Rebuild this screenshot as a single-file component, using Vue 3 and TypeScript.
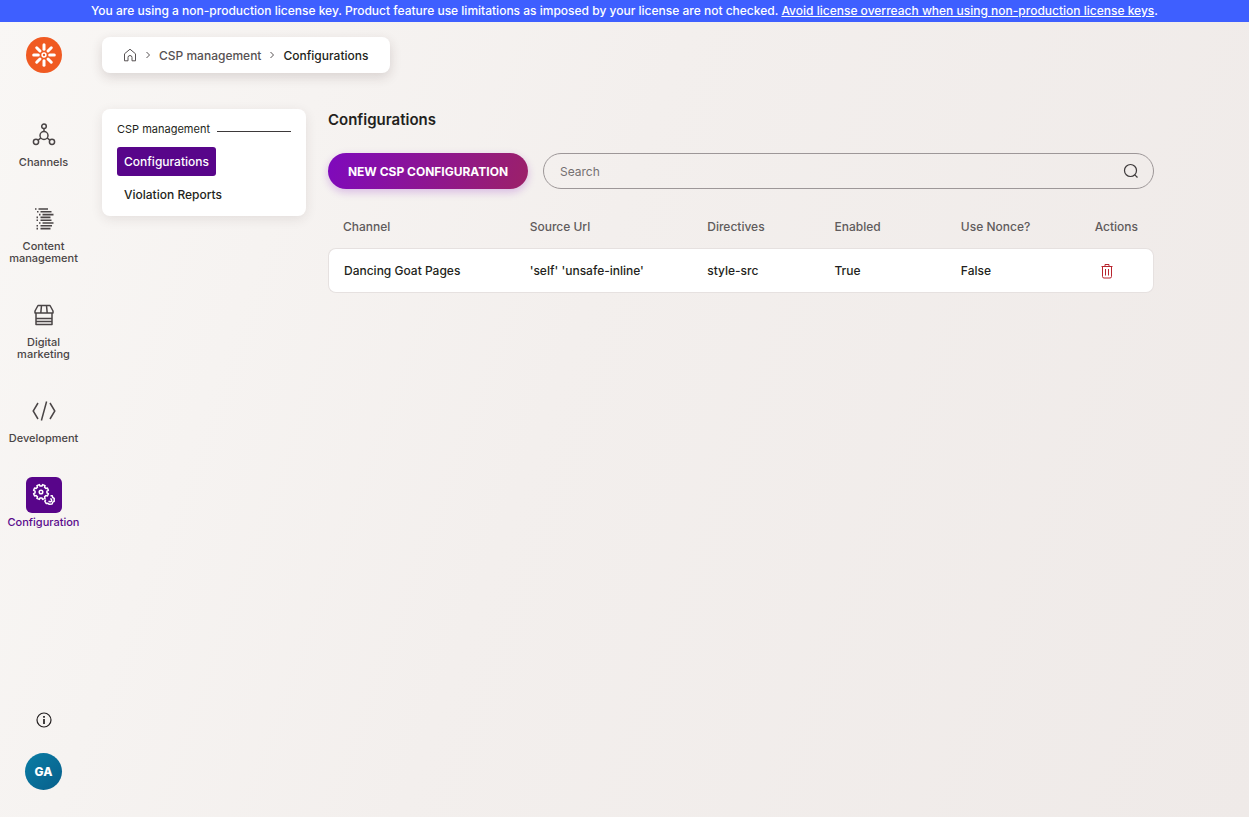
<script setup lang="ts">
import { ref } from 'vue'

interface NavItem {
  id: string
  label: string
}

const navItems: NavItem[] = [
  { id: 'channels', label: 'Channels' },
  { id: 'content', label: 'Content management' },
  { id: 'marketing', label: 'Digital marketing' },
  { id: 'development', label: 'Development' },
  { id: 'configuration', label: 'Configuration' },
]

const activeNav = 'configuration'
const search = ref('')

const rows = [
  {
    channel: 'Dancing Goat Pages',
    source: "'self' 'unsafe-inline'",
    directives: 'style-src',
    enabled: 'True',
    nonce: 'False',
  },
]

const petals = [0, 45, 90, 135, 180, 225, 270, 315]

function gearPath(cx: number, cy: number, inner: number, outer: number, teeth: number): string {
  const step = (Math.PI * 2) / teeth
  const points: string[] = []
  for (let i = 0; i < teeth; i++) {
    const a = (i + 0.5) * step
    const corners: [number, number][] = [
      [inner, a - step * 0.3],
      [outer, a - step * 0.22],
      [outer, a + step * 0.22],
      [inner, a + step * 0.3],
    ]
    for (const [r, t] of corners) {
      points.push(`${(cx + r * Math.cos(t)).toFixed(2)} ${(cy + r * Math.sin(t)).toFixed(2)}`)
    }
  }
  return `M${points.join('L')}Z`
}

const largeGear = gearPath(9, 9, 6, 7.6, 8)
</script>

<template>
  <div class="app">
    <div class="banner">
      You are using a non-production license key. Product feature use limitations as imposed by your license are not checked.
      <a href="#">Avoid license overreach when using non-production license keys</a>.
    </div>

    <div class="shell">
      <aside class="sidebar">
        <a class="logo" href="#" aria-label="Dashboard">
          <svg viewBox="0 0 36 36" width="36" height="36" fill="none">
            <circle cx="18" cy="18" r="18" fill="#f05a22" />
            <circle cx="18" cy="18" r="1.9" stroke="#fff" stroke-width="1.5" />
            <path
              v-for="angle in petals"
              :key="angle"
              d="M18 12.3V7.7"
              stroke="#fff"
              stroke-width="3"
              stroke-linecap="round"
              :transform="`rotate(${angle} 18 18)`"
            />
          </svg>
        </a>

        <nav class="nav" aria-label="Main">
          <a
            v-for="item in navItems"
            :key="item.id"
            href="#"
            class="nav-item"
            :class="{ active: item.id === activeNav }"
          >
            <span class="nav-icon">
              <svg viewBox="0 0 24 24" width="24" height="24" fill="none" stroke="currentColor" stroke-width="1.5">
                <g v-if="item.id === 'channels'">
                  <circle cx="12" cy="3.3" r="2.3" />
                  <circle cx="12" cy="12.5" r="4" />
                  <circle cx="4" cy="18.8" r="2.6" />
                  <circle cx="20" cy="18.8" r="2.6" />
                  <path d="M12 5.6v2.9M8.8 15 6.1 17.2M15.2 15l2.7 2.2" />
                </g>
                <g v-else-if="item.id === 'content'" stroke-width="1.6">
                  <path d="M3 2h1.500M6.500 2H16M5 4.800h1.500M8.500 4.800H19.500M7 7.600h1.500M10.500 7.600H21.500M4.500 10.400H6M8.500 10.400H18.500M4.500 13.200H6M8.500 13.200H19.500M7 16h1.500M10.500 16H21.500M4.500 18.800H6M8.500 18.800H20M4.500 21.600H6M8.500 21.600H18.500" />
                </g>
                <g v-else-if="item.id === 'marketing'" stroke-linejoin="round">
                  <path d="M6 2.500h12L21 8v2H3V8ZM4 10v11.500h16V10M4 15.500h16M4 18.500h16M9.500 2.500 8.800 10M14.500 2.500l.7 7.500" />
                </g>
                <g v-else-if="item.id === 'development'">
                  <path d="M6 4 1.200 12 6 20M18 4l4.800 8L18 20M14.600 2.500 9.400 21.500" />
                </g>
                <g v-else stroke-linejoin="round">
                  <path :d="largeGear" />
                  <circle cx="9" cy="9" r="1.800" />
                  <path d="M18.500 12.800h1.800l.4 1.700 1.500.9v2.900l-1.500.8-.5 1.800-2.900.4-1.300-1-1.900.1-1.300-2.200 1-1.500" />
                  <path d="M18.300 15.800a1.500 1.500 0 1 1-1.500 2" />
                </g>
              </svg>
            </span>
            <span class="nav-label">{{ item.label }}</span>
          </a>
        </nav>

        <div class="sidebar-bottom">
          <button class="info" type="button" aria-label="Information">
            <svg viewBox="0 0 16 16" width="16" height="16" fill="none" stroke="currentColor">
              <circle cx="8" cy="8" r="7" stroke-width="1.200" />
              <path d="M8 7v5M8 4v1.800" stroke-width="1.700" />
            </svg>
          </button>
          <button class="avatar" type="button">GA</button>
        </div>
      </aside>

      <main class="main">
        <nav class="breadcrumbs" aria-label="Breadcrumb">
          <a class="home" href="#" aria-label="Home">
            <svg viewBox="0 0 14 14" width="14" height="14" fill="none" stroke="currentColor">
              <path d="M1.500 5.800 7 1.200l5.500 4.600v7H9V9.500a2 2 0 0 0-4 0v3.300H1.500Z" stroke-linejoin="round" />
            </svg>
          </a>
          <svg class="chevron" viewBox="0 0 6 8" width="6" height="8" fill="none" stroke="currentColor">
            <path d="m1.500 1 3 3-3 3" />
          </svg>
          <a href="#">CSP management</a>
          <svg class="chevron" viewBox="0 0 6 8" width="6" height="8" fill="none" stroke="currentColor">
            <path d="m1.500 1 3 3-3 3" />
          </svg>
          <span class="current">Configurations</span>
        </nav>

        <div class="content">
          <nav class="side-menu" aria-label="CSP management">
            <div class="menu-title">CSP management</div>
            <a class="menu-link selected" href="#">Configurations</a>
            <a class="menu-link" href="#">Violation Reports</a>
          </nav>

          <section class="listing">
            <h1>Configurations</h1>
            <div class="toolbar">
              <button class="primary" type="button">NEW CSP CONFIGURATION</button>
              <label class="search">
                <input v-model="search" type="text" placeholder="Search" aria-label="Search" />
                <svg viewBox="0 0 16 16" width="16" height="16" fill="none" stroke="currentColor" stroke-width="1.200">
                  <circle cx="7.500" cy="7.500" r="6" />
                  <path d="m11.800 11.800 2.700 2.700" />
                </svg>
              </label>
            </div>

            <table>
              <colgroup>
                <col class="c-channel" />
                <col class="c-source" />
                <col class="c-directives" />
                <col class="c-enabled" />
                <col class="c-nonce" />
                <col class="c-actions" />
              </colgroup>
              <thead>
                <tr>
                  <th scope="col">Channel</th>
                  <th scope="col">Source Url</th>
                  <th scope="col">Directives</th>
                  <th scope="col">Enabled</th>
                  <th scope="col">Use Nonce?</th>
                  <th scope="col">Actions</th>
                </tr>
              </thead>
              <tbody>
                <tr v-for="row in rows" :key="row.channel">
                  <td>{{ row.channel }}</td>
                  <td>{{ row.source }}</td>
                  <td>{{ row.directives }}</td>
                  <td>{{ row.enabled }}</td>
                  <td>{{ row.nonce }}</td>
                  <td>
                    <button class="delete" type="button" aria-label="Delete">
                      <svg viewBox="0 0 16 16" width="16" height="16" fill="none" stroke="currentColor">
                        <path d="M2.500 3.500h11M6 3.500v-2h4v2M3.500 3.500v10q0 1.500 1.500 1.500h6q1.500 0 1.500-1.500v-10M6.500 6v6.500M9.500 6v6.500" />
                      </svg>
                    </button>
                  </td>
                </tr>
              </tbody>
            </table>
          </section>
        </div>
      </main>
    </div>
  </div>
</template>

<style>
body {
  margin: 0;
}
</style>

<style scoped>
.app {
  display: flex;
  flex-direction: column;
  min-height: 100vh;
  background: linear-gradient(110deg, #f9f7f5 0%, #f3efed 45%, #efeae8 100%);
  color: #231f20;
  font-family: Inter, "Liberation Sans", sans-serif;
  font-size: 12px;
  line-height: 17px;
  font-weight: 500;
}

.app * {
  box-sizing: border-box;
}

a {
  color: inherit;
  text-decoration: none;
}

button {
  padding: 0;
  border: 0;
  background: none;
  color: inherit;
  font: inherit;
  cursor: pointer;
}

svg {
  display: block;
  flex: none;
}

.banner {
  padding: 3px 8px;
  background: #3e5fff;
  color: #fff;
  line-height: 16px;
  text-align: center;
}

.banner a {
  text-decoration: underline;
}

.shell {
  display: flex;
  flex: 1;
}

.sidebar {
  display: flex;
  flex-direction: column;
  align-items: center;
  width: 87px;
  padding: 15px 0 27px;
}

.nav {
  display: flex;
  flex-direction: column;
  gap: 33px;
  width: 100%;
  margin-top: 44px;
}

.nav-item {
  display: flex;
  flex-direction: column;
  align-items: center;
  gap: 3px;
  color: #4a4546;
  font-size: 11px;
  line-height: 12px;
  text-align: center;
}

.nav-icon {
  display: grid;
  place-items: center;
  width: 36px;
  height: 36px;
  border-radius: 6px;
}

.nav-label {
  width: 72px;
  display: flex;
  justify-content: center;
}

.active {
  color: #5a0a8c;
}

.active .nav-icon {
  background: #58058a;
  color: #fff;
}

.sidebar-bottom {
  display: flex;
  flex-direction: column;
  align-items: center;
  gap: 25px;
  margin-top: auto;
}

.avatar {
  width: 37px;
  height: 37px;
  border-radius: 50%;
  background: linear-gradient(135deg, #0a7da5, #075f8b);
  color: #fff;
  font-weight: 800;
}

.main {
  flex: 1;
  min-width: 0;
  padding: 15px 95px 24px 15px;
}

.breadcrumbs {
  display: flex;
  align-items: center;
  width: fit-content;
  height: 36px;
  padding: 0 22px 0 21px;
  border-radius: 8px;
  background: #fff;
  box-shadow: 0 4px 12px rgb(60 40 40 / 16%);
  color: #575253;
}

.chevron {
  margin: 0 8px;
}

.current {
  color: #231f20;
}

.content {
  display: flex;
  align-items: flex-start;
  gap: 22px;
  margin-top: 36px;
}

.side-menu {
  display: flex;
  flex: none;
  flex-direction: column;
  align-items: flex-start;
  width: 204px;
  padding: 12px 15px 7px;
  border-radius: 8px;
  background: #fff;
  box-shadow: 0 3px 12px rgb(60 40 40 / 10%);
}

.menu-title {
  display: flex;
  align-items: center;
  gap: 7px;
  width: 100%;
  margin-bottom: 9px;
  font-size: 11px;
  font-weight: 400;
}

.menu-title::after {
  content: "";
  flex: 1;
  height: 1px;
  margin-top: 4px;
  background: #3d393a;
}

.menu-link {
  padding: 6px 7px;
  border-radius: 3px;
}

.menu-link + .menu-link {
  margin-top: 4px;
}

.selected {
  background: #58058a;
  color: #fff;
}

.listing {
  flex: 1;
  min-width: 0;
}

h1 {
  margin: 0 0 22px;
  font-size: 15px;
  line-height: 22px;
  font-weight: 600;
}

.toolbar {
  display: flex;
  gap: 15px;
}

.primary {
  flex: none;
  width: 200px;
  height: 36px;
  border-radius: 18px;
  background: linear-gradient(110deg, #7e09bd, #9c2168);
  box-shadow: 0 3px 8px rgb(126 9 189 / 24%);
  color: #fff;
  font-weight: 700;
}

.search {
  display: flex;
  flex: 1;
  align-items: center;
  height: 36px;
  padding: 0 14px 0 16px;
  border: 1px solid #9d9798;
  border-radius: 18px;
  color: #3d393a;
}

.search input {
  flex: 1;
  min-width: 0;
  padding: 0;
  border: 0;
  outline: 0;
  background: none;
  color: #231f20;
  font: inherit;
  font-weight: 400;
}

.search input::placeholder {
  color: #757071;
  opacity: 1;
}

table {
  width: 100%;
  margin-top: 15px;
  border-spacing: 0;
  table-layout: fixed;
}

.c-channel {
  width: 22.6%;
}

.c-source {
  width: 21.5%;
}

.c-directives {
  width: 15.4%;
}

.c-enabled {
  width: 15.3%;
}

.c-nonce {
  width: 16.2%;
}

.c-actions {
  width: 9%;
}

th,
td {
  height: 44px;
  padding: 0 0 0 15px;
  text-align: left;
  font-weight: 500;
  white-space: nowrap;
}

th {
  color: #605b5c;
}

td {
  height: 45px;
  border: solid #e6e1e0;
  border-width: 1px 0;
  background: #fff;
}

td:first-child {
  border-left-width: 1px;
  border-radius: 8px 0 0 8px;
}

td:last-child {
  border-right-width: 1px;
  border-radius: 0 8px 8px 0;
}

.delete {
  display: block;
  margin-left: 4px;
  color: #b9252e;
}
</style>
